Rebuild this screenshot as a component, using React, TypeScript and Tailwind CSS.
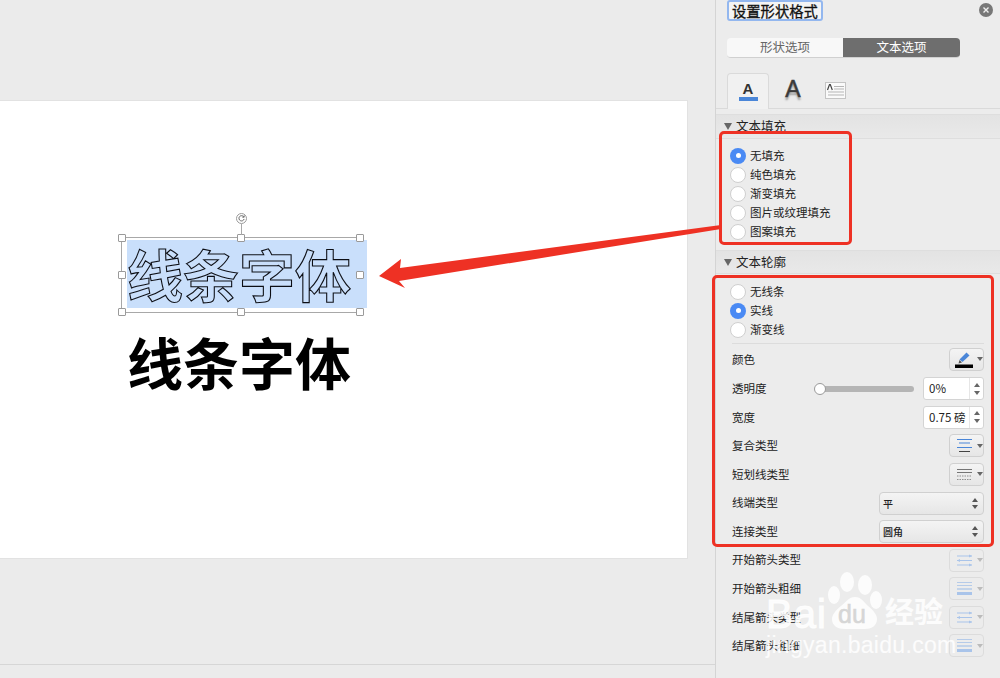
import type { ReactNode } from 'react';

const cjk = "font-['Noto_Sans_CJK_SC','Noto_Sans',sans-serif]";

function Radio({ label, checked }: { label: string; checked?: boolean }) {
  return (
    <div className="flex h-[19px] items-center pl-[14px]">
      {checked ? (
        <span className="flex h-[16px] w-[16px] items-center justify-center rounded-full bg-[#4a8af4]">
          <span className="h-[5px] w-[5px] rounded-full bg-white" />
        </span>
      ) : (
        <span className="h-[16px] w-[16px] rounded-full border border-[#cfcfcf] bg-white" />
      )}
      <span className="ml-[4px] text-[11.5px] text-[#222]">{label}</span>
    </div>
  );
}

function SectionHeader({ label, h }: { label: string; h: string }) {
  return (
    <div className={`flex items-center border-y border-[#dedede] bg-gradient-to-b from-[#e3e3e3] to-[#e9e9e9] pl-[8px] ${h}`}>
      <span className="h-0 w-0 border-x-[4px] border-t-[7px] border-x-transparent border-t-[#666]" />
      <span className="ml-[4px] text-[12.5px] text-[#222]">{label}</span>
    </div>
  );
}

function IconButton({ children, disabled }: { children: ReactNode; disabled?: boolean }) {
  return (
    <div className={`flex h-[23px] w-[35px] items-center rounded-[4px] border pl-[5px] ${disabled ? 'border-[#dcdcdc] bg-[#ececec]' : 'border-[#d0d0d0] bg-gradient-to-b from-[#f4f4f4] to-[#e6e6e6]'}`}>
      <span className="flex w-[18px] justify-center">{children}</span>
      <span className={`ml-[4px] h-0 w-0 border-x-[3px] border-t-[4px] border-x-transparent ${disabled ? 'border-t-[#bbb]' : 'border-t-[#666]'}`} />
    </div>
  );
}

function Stepper() {
  return (
    <span className="flex h-full w-[14px] flex-col items-center justify-center gap-[4px] border-l border-[#e6e6e6]">
      <span className="h-0 w-0 border-x-[3px] border-b-[4px] border-x-transparent border-b-[#666]" />
      <span className="h-0 w-0 border-x-[3px] border-t-[4px] border-x-transparent border-t-[#666]" />
    </span>
  );
}

function SelectBox({ value }: { value: string }) {
  return (
    <div className="flex h-[23px] w-[105px] items-center justify-between rounded-[4px] border border-[#d0d0d0] bg-gradient-to-b from-[#f4f4f4] to-[#e6e6e6] pl-[3px] pr-[2px]">
      <span className="text-[10px] font-medium text-[#222]">{value}</span>
      <span className="flex w-[12px] flex-col items-center gap-[3px]">
        <span className="h-0 w-0 border-x-[3px] border-b-[4px] border-x-transparent border-b-[#555]" />
        <span className="h-0 w-0 border-x-[3px] border-t-[4px] border-x-transparent border-t-[#555]" />
      </span>
    </div>
  );
}

function Row({ label, children }: { label: string; children: ReactNode }) {
  return (
    <div className="flex h-[28.55px] items-center justify-between pl-[16px] pr-[16px]">
      <span className="text-[11.5px] text-[#222]">{label}</span>
      {children}
    </div>
  );
}

function CompoundIcon() {
  return (
    <svg width="17" height="15" viewBox="0 0 17 15">
      <path d="M1 1.5h15M3 5h11M1 9.500h15" stroke="#4a86d8" strokeWidth="1.200" />
      <path d="M3 13.500h11" stroke="#444" strokeWidth="1" />
    </svg>
  );
}

function DashIcon() {
  return (
    <svg width="17" height="13" viewBox="0 0 17 13">
      <path d="M1 1.5h15M1 4.5h15" stroke="#555" strokeWidth="0.8" />
      <path d="M1 8h15M1 11.5h15" stroke="#777" strokeWidth="0.8" strokeDasharray="1.5 1" />
    </svg>
  );
}

function ArrowLinesIcon() {
  return (
    <svg width="17" height="13" viewBox="0 0 17 13">
      <path d="M1 2h15M1 6.500h15M1 11h15" stroke="#a9c4ea" strokeWidth="1" />
      <path d="M13 .5l3 1.500-3 1.500zM4 5l-3 1.500 3 1.500zM13 9.500l3 1.500-3 1.500z" fill="#a9c4ea" />
    </svg>
  );
}

function WeightIcon() {
  return (
    <svg width="17" height="15" viewBox="0 0 17 15">
      <path d="M1 1.500h15M1 4.500h15" stroke="#b5cbe9" strokeWidth="1" />
      <path d="M1 8h15" stroke="#b5cbe9" strokeWidth="1.500" />
      <path d="M1 12.500h15" stroke="#a9c4ea" strokeWidth="3" />
    </svg>
  );
}

function Handle({ className }: { className: string }) {
  return <span className={`absolute h-[8px] w-[8px] rounded-[1px] border border-[#9a9a9a] bg-white ${className}`} />;
}

function TextFrame() {
  return (
    <div className="absolute left-[122px] top-[136px] h-[76px] w-[240px] border border-[#a8a8a8]">
      <div className="absolute left-[5px] top-[2px] flex h-[68px] w-[240px] items-center bg-[#c9dffb] pb-[2px]">
        <span className={`text-[56px] font-bold leading-none text-[#c9dffb] [-webkit-text-stroke:1.1px_#0c0e14] ${cjk}`}>线条字体</span>
      </div>
      <Handle className="-left-[4px] -top-[4px]" />
      <Handle className="left-[115px] -top-[4px]" />
      <Handle className="-right-[4px] -top-[4px]" />
      <Handle className="-left-[4px] top-[33px]" />
      <Handle className="-right-[4px] top-[33px]" />
      <Handle className="-left-[4px] -bottom-[4px]" />
      <Handle className="left-[115px] -bottom-[4px]" />
      <Handle className="-right-[4px] -bottom-[4px]" />
      <span className="absolute left-[119px] -top-[14px] h-[11px] w-px bg-[#a8a8a8]" />
      <span className="absolute left-[114px] -top-[25px] flex h-[11px] w-[11px] items-center justify-center rounded-full border border-[#9a9a9a] bg-white text-[#555]">
        <svg width="7" height="7" viewBox="0 0 8 8" fill="none">
          <path d="M6.500 2A3 3 0 1 0 7 4.500" stroke="#555" strokeWidth="1" />
          <path d="M7 .5V2.500H5" stroke="#555" strokeWidth="1" />
        </svg>
      </span>
    </div>
  );
}

export default function App() {
  return (
    <div className={`relative flex h-[678px] w-[1000px] overflow-hidden bg-[#ebebeb] ${cjk}`}>
      {/* Slide area */}
      <div className="flex h-full w-[715px] shrink-0 flex-col items-end">
        <div className="relative mr-[27px] mt-[100px] h-[459px] w-[690px] shrink-0 border border-[#e2e2e2] bg-white">
          <TextFrame />
          <div className="absolute left-[128px] top-[232px] text-[56px] font-bold leading-[56px] text-black">线条字体</div>
        </div>
        <div className="mt-[105px] h-px w-full bg-[#d6d6d6]" />
      </div>

      {/* Format panel */}
      <aside className="flex h-full w-[285px] shrink-0 flex-col border-l border-[#d4d4d4] bg-[#ececec]">
        <div className="flex h-[38px] items-start justify-between pl-[11px] pr-[7px]">
          <div className="flex h-[21px] items-center rounded-[3px] border-2 border-[#93b7ef] bg-[#f4f4f4] px-[3px] text-[14.300px] text-[#111] [-webkit-text-stroke:0.3px_#111]">设置形状格式</div>
          <span className="mt-[3px] flex h-[14px] w-[14px] items-center justify-center rounded-full bg-[#777]">
            <svg width="8" height="8" viewBox="0 0 8 8">
              <path d="M1.500 1.500l5 5M6.500 1.500l-5 5" stroke="#eee" strokeWidth="1.400" />
            </svg>
          </span>
        </div>

        <div className="ml-[11px] flex h-[20px] w-[233px] overflow-hidden rounded-[4px] border-b border-[#d0d0d0] text-[12.5px]">
          <div className="flex w-[116px] items-center justify-center bg-[#f8f8f8] text-[#666]">形状选项</div>
          <div className="flex flex-1 items-center justify-center bg-[#6e6e6e] text-white">文本选项</div>
        </div>

        <div className="mt-[15px] flex h-[36px] items-end border-b border-[#dadada] pl-[11px]">
          <div className="-mb-px flex h-[36px] w-[42px] flex-col items-center rounded-t-[4px] border border-b-0 border-[#dadada] bg-[#f1f1f1] pt-[8px]">
            <span className="text-[15px] font-bold leading-[13px] text-[#333] font-['Liberation_Sans',sans-serif]">A</span>
            <span className="mt-[2px] h-[4px] w-[19px] bg-[#4a86d8]" />
          </div>
          <div className="ml-[11px] flex h-[36px] w-[26px] justify-center pt-[6px]">
            <span className="text-[23px] leading-[22px] text-[#3a3a3a] [-webkit-text-stroke:0.5px_#3a3a3a] [text-shadow:0_3px_2px_#999] font-['Liberation_Sans',sans-serif]">A</span>
          </div>
          <div className="ml-[19px] self-start pt-[9px]">
            <svg width="21" height="17" viewBox="0 0 21 17">
              <rect x=".5" y=".5" width="20" height="16" fill="#fafafa" stroke="#c4c4c4" />
              <path d="M9 4.500h10M9 7h10M3 10h16M3 13h16" stroke="#b5b5b5" />
              <path d="M2.500 8l2-5.500h.8l2 5.500" fill="none" stroke="#444" strokeWidth="1.200" />
            </svg>
          </div>
        </div>

        <div className="mt-[5px]">
          <SectionHeader label="文本填充" h="h-[25px]" />
        </div>
        <div className="pt-[7px]">
          <Radio label="无填充" checked />
          <Radio label="纯色填充" />
          <Radio label="渐变填充" />
          <Radio label="图片或纹理填充" />
          <Radio label="图案填充" />
        </div>

        <div className="mt-[9px]">
          <SectionHeader label="文本轮廓" h="h-[24px]" />
        </div>
        <div className="pt-[8px]">
          <Radio label="无线条" />
          <Radio label="实线" checked />
          <Radio label="渐变线" />
        </div>
        <div className="mx-[16px] mt-[4px] h-px bg-[#dcdcdc]" />

        <div className="mt-[1px]">
          <Row label="颜色">
            <IconButton>
              <svg width="18" height="18" viewBox="0 0 18 18">
                <path d="M4.500 9.500L11.500 2.500l3 3-7 6.500z" fill="#4a86d8" />
                <path d="M4.500 10l2.500 2.500-3.500 1z" fill="#555" />
                <rect x="0" y="14.500" width="18" height="3.500" fill="#000" />
              </svg>
            </IconButton>
          </Row>
          <div className="pt-[1px]">
            <Row label="透明度">
              <div className="flex items-center">
                <div className="relative mr-[9px] h-[6px] w-[99px] rounded-full bg-[#b5b5b5]">
                  <span className="absolute -left-[1px] -top-[3px] h-[12px] w-[12px] rounded-full border border-[#9a9a9a] bg-white" />
                </div>
                <div className="flex h-[23px] w-[61px] items-center justify-between rounded-[3px] border border-[#d4d4d4] bg-white pl-[5px] text-[11.5px] text-[#222]">
                  <span>0%</span>
                  <Stepper />
                </div>
              </div>
            </Row>
          </div>
          <Row label="宽度">
            <div className="flex h-[23px] w-[61px] items-center justify-between rounded-[3px] border border-[#d4d4d4] bg-white pl-[5px] text-[11.5px] text-[#222]">
              <span>0.75 磅</span>
              <Stepper />
            </div>
          </Row>
          <Row label="复合类型">
            <IconButton><CompoundIcon /></IconButton>
          </Row>
          <Row label="短划线类型">
            <IconButton><DashIcon /></IconButton>
          </Row>
          <Row label="线端类型">
            <SelectBox value="平" />
          </Row>
          <Row label="连接类型">
            <SelectBox value="圆角" />
          </Row>
          <Row label="开始箭头类型">
            <IconButton disabled><ArrowLinesIcon /></IconButton>
          </Row>
          <Row label="开始箭头粗细">
            <IconButton disabled><WeightIcon /></IconButton>
          </Row>
          <Row label="结尾箭头类型">
            <IconButton disabled><ArrowLinesIcon /></IconButton>
          </Row>
          <Row label="结尾箭头粗细">
            <IconButton disabled><WeightIcon /></IconButton>
          </Row>
        </div>
      </aside>

      {/* Red annotations */}
      <div className="absolute left-[719px] top-[131px] h-[114px] w-[133px] rounded-[5px] border-[3px] border-[#ee3124]" />
      <div className="absolute left-[712px] top-[275px] h-[272px] w-[282px] rounded-[5px] border-[3px] border-[#ee3124]" />
      <svg className="absolute left-[375px] top-[220px]" width="350" height="75" viewBox="375 220 350 75">
        <polygon points="379,276 401,259 400,268 721,225 721,229 399,281 405,288" fill="#ee3124" />
      </svg>

      {/* Baidu watermark */}
      <div className="absolute left-[766px] top-[570px] h-[90px] w-[190px] text-white/85">
        <span className="absolute left-0 top-[21px] text-[40px] leading-[46px] tracking-[1px] [-webkit-text-stroke:1px_rgba(255,255,255,0.85)] font-['Liberation_Sans',sans-serif]">Bai</span>
        <svg className="absolute left-[60px] top-0" width="60" height="60" viewBox="0 0 60 60" fill="currentColor">
          <ellipse cx="21" cy="12" rx="7" ry="10" />
          <ellipse cx="39" cy="15" rx="7" ry="10" />
          <ellipse cx="8" cy="25" rx="6" ry="9" />
          <ellipse cx="50" cy="30" rx="6" ry="9" />
          <path d="M29 27c6 0 9 5 13 9 6 5 9 9 9 13 0 7-6 10-12 10H19C12 59 6 56 6 49c0-4 3-8 9-13 5-4 8-9 14-9z" />
        </svg>
        <span className="absolute left-[72px] top-[31px] text-[25px] leading-[26px] text-[#d6d6d6] [-webkit-text-stroke:0.6px_#d6d6d6] font-['Liberation_Sans',sans-serif]">du</span>
        <span className="absolute left-[119px] top-[24px] text-[29px] font-bold leading-[32px]">经验</span>
        <span className="absolute left-0 top-[62px] text-[23px] leading-[26px] tracking-[0.3px] font-['Liberation_Sans',sans-serif]">jingyan.baidu.com</span>
      </div>
    </div>
  );
}
